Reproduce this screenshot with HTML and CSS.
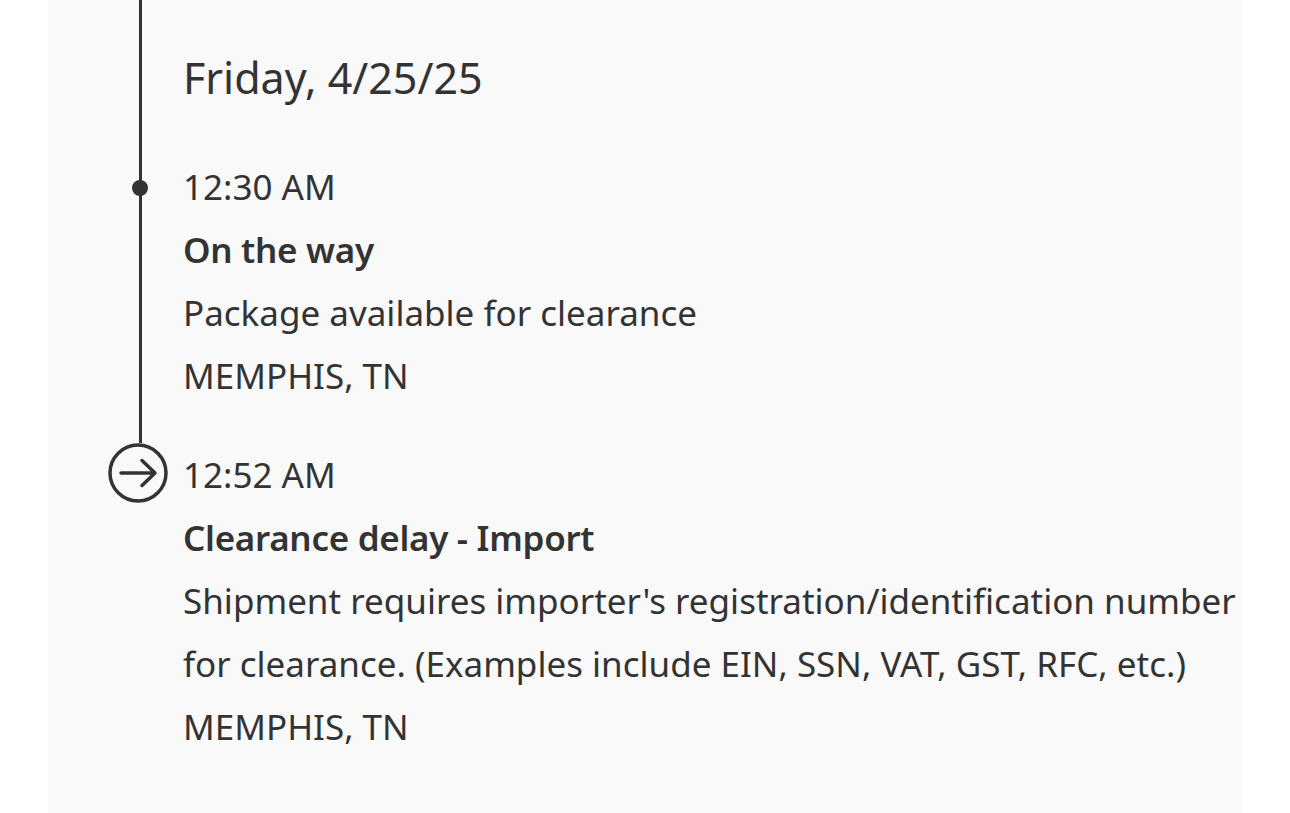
FILE: index.html
```html
<!DOCTYPE html>
<html lang="en">
<head>
  <meta charset="UTF-8">
  <meta name="viewport" content="width=device-width, initial-scale=1.0">
  <title>Shipment Travel History</title>
  <link rel="stylesheet" href="styles.css">
</head>
<body>

<div class="panel">
  <div class="track">
    <h2 class="day">Friday, 4/25/25</h2>
    <div class="event">
      <p class="time">12:30 AM</p>
      <p class="status">On the way</p>
      <p>Package available for clearance</p>
      <p>MEMPHIS, TN</p>
    </div>
  </div>

  <div class="event current">
    <svg class="event-icon" viewBox="0 0 60 60" width="60" height="60" aria-hidden="true">
      <circle cx="30" cy="30" r="28" fill="none" stroke="#333" stroke-width="3.5"/>
      <path d="M13 30 H47 M34 17.5 L47 30 L34 42.5" fill="none" stroke="#333" stroke-width="3.5" stroke-linecap="round" stroke-linejoin="round"/>
    </svg>
    <div class="event-body">
      <p class="time">12:52 AM</p>
      <p class="status">Clearance delay - Import</p>
      <p>Shipment requires importer's registration/identification number for clearance. (Examples include EIN, SSN, VAT, GST, RFC, etc.)</p>
      <p>MEMPHIS, TN</p>
    </div>
  </div>
</div>

</body>
</html>
```

FILE: styles.css
```css
body {
  font-family: "Noto Sans", Lato, sans-serif;
  background-color: #ffffff;
  color: #333333;
  margin: 0;
  padding: 0;
}
p {
  margin: 0;
}
.panel {
  margin: 0 48px;
  height: 813px;
  background-color: #f9f9f9;
}
.track {
  margin-left: 91px;
  padding: 46px 0 36px 41px;
  border-left: 3px solid #333333;
}
.day {
  margin: 0 0 46px 0;
  font-size: 43px;
  font-weight: 400;
  line-height: 63px;
}
.event {
  position: relative;
  font-size: 35px;
  line-height: 63px;
}
/* dot sitting on the rail */
.track .event::before {
  content: "";
  position: absolute;
  top: 25px;
  left: -51px;
  width: 16px;
  height: 16px;
  border-radius: 50%;
  background-color: #333333;
}
.status {
  font-weight: 600;
  letter-spacing: -0.3px;
}
.current {
  display: flex;
  gap: 15px;
  margin-left: 60px;
}
.event-icon {
  flex: none;
  width: 60px;
  height: 60px;
}
.event-body {
  width: 1058px;
}
```
